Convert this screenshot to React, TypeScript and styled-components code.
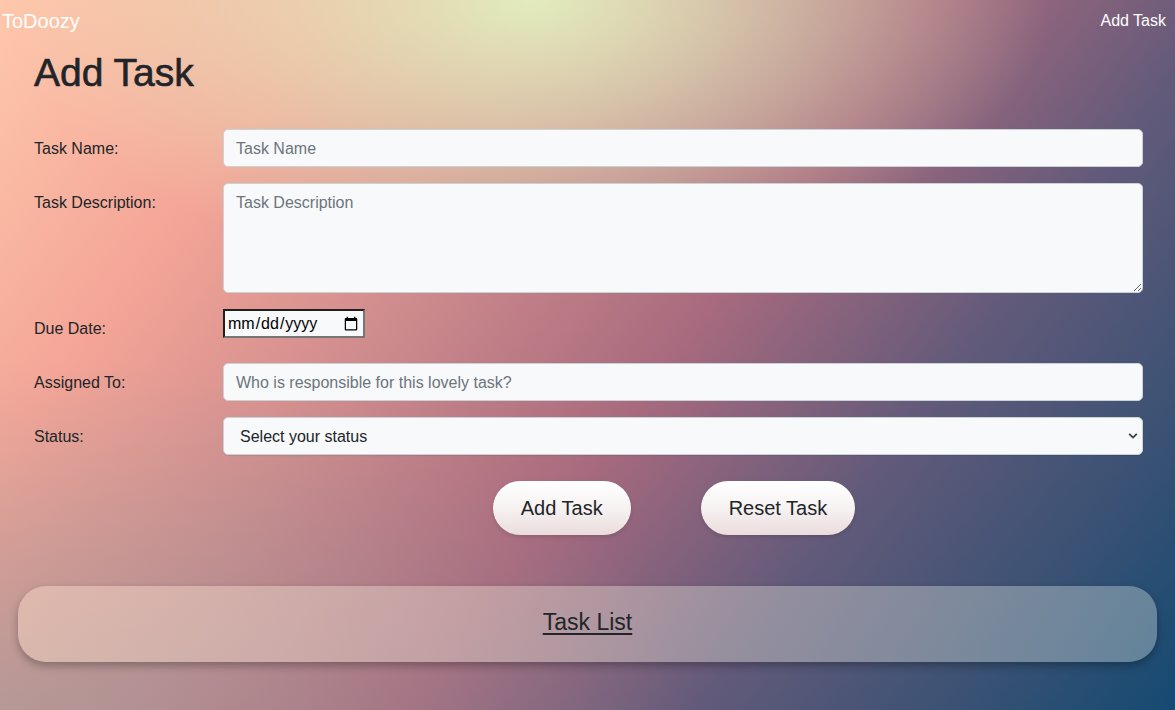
import React from "react";
import styled, { createGlobalStyle } from "styled-components";

const GlobalStyle = createGlobalStyle`
  html, body { margin: 0; padding: 0; }
  body {
    font-family: "Liberation Sans", Arial, Helvetica, sans-serif;
    color: #212529;
  }
  * { box-sizing: border-box; }
`;

const Page = styled.div`
  min-height: 100vh;
  width: 100%;
  overflow: hidden;
  background:
    radial-gradient(ellipse 520px 280px at 530px 0px, rgba(226, 240, 192, 0.95), rgba(226, 240, 192, 0) 100%),
    radial-gradient(ellipse 700px 360px at 0px 720px, rgba(150, 156, 156, 0.55), rgba(150, 156, 156, 0) 100%),
    linear-gradient(127deg, #fec8ac 0%, #f4a597 20%, #cc8a8c 38%, #a86a7e 55%, #625a7a 72%, #3d5274 86%, #154a72 100%);
  padding-bottom: 40px;
`;

const NavBar = styled.nav`
  display: flex;
  justify-content: space-between;
  align-items: center;
  padding: 6px 9px 0 2px;
  height: 36px;
`;

const Brand = styled.a`
  color: #fff;
  font-size: 20px;
  line-height: 30px;
  text-decoration: none;
`;

const NavLink = styled.a`
  color: #fff;
  font-size: 16px;
  line-height: 30px;
  text-decoration: none;
`;

const Heading = styled.h1`
  margin: 13px 0 32px 34px;
  font-size: 39px;
  line-height: 48px;
  font-weight: 500;
  color: #212529;
  -webkit-text-stroke: 0.6px #212529;
`;

const Form = styled.form`
  display: grid;
  grid-template-columns: 165px 1fr;
  column-gap: 24px;
  row-gap: 16px;
  align-items: start;
  padding: 0 32px 0 34px;
`;

const Label = styled.label`
  font-size: 16px;
  line-height: 24px;
  padding-top: 8px;
  padding-bottom: 6px;
  color: #212529;
`;

const fieldBase = `
  width: 100%;
  font-family: "Liberation Sans", Arial, Helvetica, sans-serif;
  font-size: 16px;
  line-height: 24px;
  color: #212529;
  background-color: #f8f9fa;
  border: 1px solid #c9d1d9;
  border-radius: 5px;
  padding: 7px 12px 5px 12px;
  outline: none;
  &::placeholder { color: #6c757d; }
`;

const TextInput = styled.input`
  ${fieldBase}
  height: 38px;
`;

const TextArea = styled.textarea`
  ${fieldBase}
  height: 110px;
  resize: vertical;
  display: block;
`;

const DateInput = styled.input`
  width: 142px;
  height: 29px;
  font-family: "Liberation Sans", Arial, Helvetica, sans-serif;
  font-size: 16px;
  color: #000;
  background: #f8f9fa;
  border: 2px solid;
  border-color: #1f1f1f #767676 #767676 #1f1f1f;
  padding: 1px 2px;
  margin-top: 0;
`;

const SelectWrap = styled.div`
  position: relative;
  width: 100%;
`;

const Select = styled.select`
  ${fieldBase}
  height: 38px;
  appearance: none;
  -webkit-appearance: none;
  padding: 7px 30px 5px 16px;
  box-shadow: 0 1px 1px rgba(0, 0, 0, 0.08);
`;

const Chevron = styled.svg`
  position: absolute;
  right: 5px;
  top: 15px;
  width: 10px;
  height: 8px;
  pointer-events: none;
`;

const ButtonRow = styled.div`
  grid-column: 2;
  display: flex;
  justify-content: center;
  gap: 70px;
  padding-right: 18px;
  margin-top: 10px;
`;

const PillButton = styled.button`
  height: 54px;
  padding: 0 28px;
  border: none;
  border-radius: 27px;
  font-family: "Liberation Sans", Arial, Helvetica, sans-serif;
  font-size: 20px;
  color: #212529;
  background: linear-gradient(to bottom, #ffffff 0%, #f7f2f2 50%, #eadcdc 100%);
  box-shadow: 0 2px 4px rgba(0, 0, 0, 0.12);
  cursor: pointer;
`;

const TaskListCard = styled.div`
  margin: 51px 18px 0 18px;
  height: 76px;
  padding-bottom: 5px;
  border-radius: 28px;
  background: linear-gradient(to right, rgba(255, 225, 205, 0.42), rgba(200, 215, 215, 0.4));
  box-shadow: 0 4px 8px rgba(0, 0, 0, 0.28);
  display: flex;
  align-items: center;
  justify-content: center;
`;

const TaskListLink = styled.a`
  font-size: 23px;
  line-height: 28px;
  color: #212529;
  text-decoration: underline;
  text-underline-offset: 3px;
  text-decoration-thickness: 2px;
`;

export default function App() {
  return (
    <>
      <GlobalStyle />
      <Page>
        <NavBar>
          <Brand href="#">ToDoozy</Brand>
          <NavLink href="#">Add Task</NavLink>
        </NavBar>
        <Heading>Add Task</Heading>
        <Form onSubmit={(e) => e.preventDefault()}>
          <Label htmlFor="name">Task Name:</Label>
          <TextInput id="name" placeholder="Task Name" />

          <Label htmlFor="desc">Task Description:</Label>
          <TextArea id="desc" placeholder="Task Description" />

          <Label htmlFor="due">Due Date:</Label>
          <div>
            <DateInput id="due" type="date" />
          </div>

          <Label htmlFor="assigned">Assigned To:</Label>
          <TextInput id="assigned" placeholder="Who is responsible for this lovely task?" />

          <Label htmlFor="status">Status:</Label>
          <SelectWrap>
            <Select id="status" defaultValue="">
              <option value="">Select your status</option>
              <option value="todo">To Do</option>
              <option value="progress">In Progress</option>
              <option value="review">Review</option>
              <option value="done">Done</option>
            </Select>
            <Chevron viewBox="0 0 10 8">
              <path d="M1.2 1.8 L5 5.6 L8.8 1.8" fill="none" stroke="#3a3f45" strokeWidth="1.8" />
            </Chevron>
          </SelectWrap>

          <ButtonRow>
            <PillButton type="submit">Add Task</PillButton>
            <PillButton type="reset">Reset Task</PillButton>
          </ButtonRow>
        </Form>
        <TaskListCard>
          <TaskListLink href="#">Task List</TaskListLink>
        </TaskListCard>
      </Page>
    </>
  );
}
